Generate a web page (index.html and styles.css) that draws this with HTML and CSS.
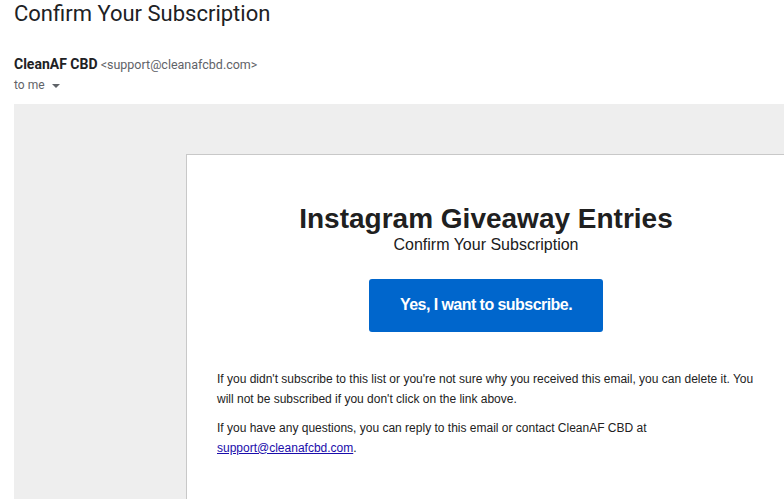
FILE: index.html
```html
<!DOCTYPE html>
<html lang="en">
<head>
  <meta charset="UTF-8" />
  <title>Confirm Your Subscription</title>
  <link rel="stylesheet" href="styles.css">
</head>
<body>

  <h1 class="subject">Confirm Your Subscription</h1>

  <div class="sender">
    <div class="from"><b>CleanAF CBD</b> <span class="addr">&lt;support@cleanafcbd.com&gt;</span></div>
    <div class="to">to me <span class="caret"></span></div>
  </div>

  <div class="mail-body">
    <div class="card">
      <h2>Instagram Giveaway Entries</h2>
      <p class="sub">Confirm Your Subscription</p>
      <a class="btn" href="#">Yes, I want to subscribe.</a>
      <p class="note">If you didn't subscribe to this list or you're not sure why you received this email, you can delete it. You will not be subscribed if you don't click on the link above.</p>
      <p class="note">If you have any questions, you can reply to this email or contact CleanAF CBD at <a href="#">support@cleanafcbd.com</a>.</p>
    </div>
  </div>

</body>
</html>
```

FILE: styles.css
```css
body {
  margin: 0;
  background: #fff;
  font-family: Roboto, "Liberation Sans", sans-serif;
  overflow: hidden;
  height: 499px;
}
.subject {
  margin: 0;
  padding: 0 0 0 14px;
  font-size: 22px;
  font-weight: 400;
  line-height: 28px;
  color: #202124;
}
.sender {
  padding: 26px 0 0 14px;
  height: 50px;
}
.from {
  font-size: 12.5px;
  line-height: 20px;
  color: #5f6368;
}
.from b {
  font-size: 14px;
  color: #202124;
}
.to {
  font-size: 12px;
  line-height: 20px;
  color: #5f6368;
}
.caret {
  display: inline-block;
  margin-left: 4px;
  vertical-align: middle;
  border-left: 4px solid transparent;
  border-right: 4px solid transparent;
  border-top: 4px solid #5f6368;
}
.mail-body {
  margin-left: 14px;
  background: #eeeeee;
  padding: 50px 0 0 172px;
  height: 345px;
  overflow: hidden;
}
.card {
  width: 600px;
  background: #fff;
  border: 1px solid #c8c8c8;
  box-sizing: border-box;
  padding: 47px 30px 0;
  height: 400px;
  font-family: "Liberation Sans", Arial, sans-serif;
  text-align: center;
  color: #202020;
}
.card h2 {
  margin: 0;
  font-size: 28px;
  line-height: 34px;
  font-weight: 700;
}
.sub {
  margin: 0;
  font-size: 16px;
  line-height: 17px;
}
.btn {
  display: inline-block;
  margin-top: 26px;
  width: 234px;
  height: 53px;
  line-height: 52px;
  background: #0066cc;
  color: #fff;
  border-radius: 3px;
  font-size: 16px;
  font-weight: 700;
  text-decoration: none;
  letter-spacing: -0.55px;
}
.note {
  margin: 38px 0 0;
  text-align: left;
  font-size: 12px;
  line-height: 19.5px;
  color: #222;
}
.note + .note {
  margin-top: 10px;
}
.note a {
  color: #1a0dab;
}
```
